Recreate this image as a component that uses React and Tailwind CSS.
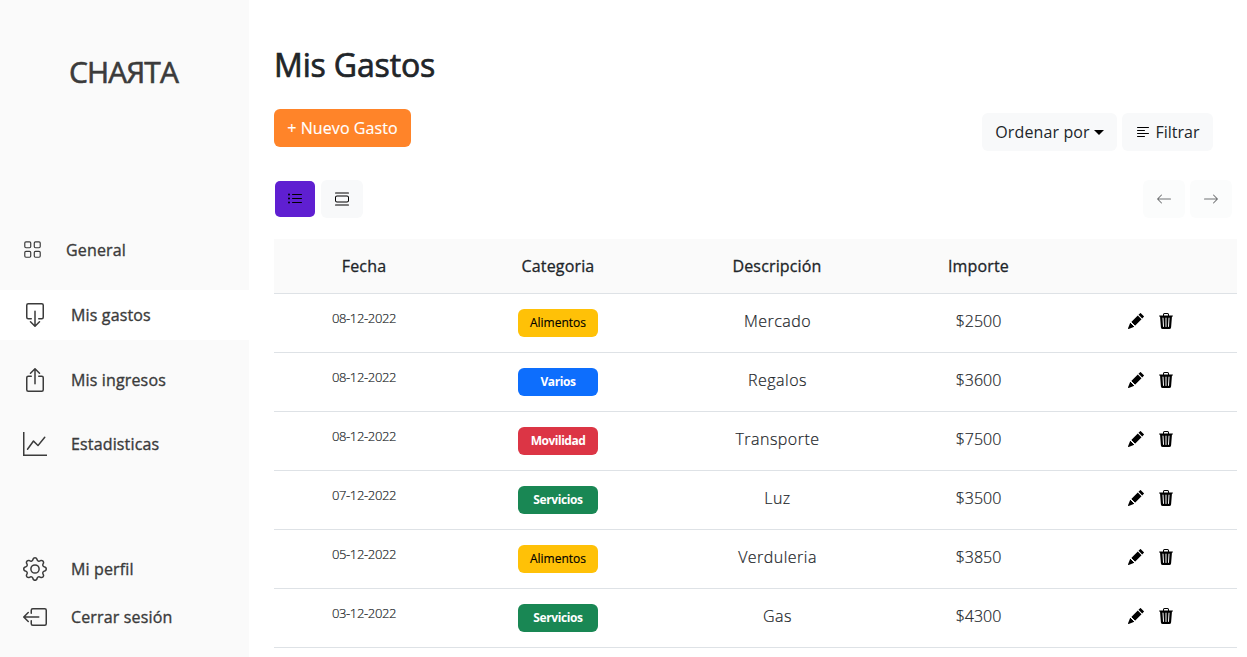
import React from "react";
import {
  BsGrid, BsBoxArrowDown, BsBoxArrowUp, BsGraphUp, BsGear, BsBoxArrowLeft,
  BsListUl, BsViewList, BsTextLeft, BsArrowLeft, BsArrowRight, BsPencilFill, BsTrash3Fill,
} from "react-icons/bs";

const rows = [
  ["08-12-2022", "Alimentos", "Mercado", "$2500"],
  ["08-12-2022", "Varios", "Regalos", "$3600"],
  ["08-12-2022", "Movilidad", "Transporte", "$7500"],
  ["07-12-2022", "Servicios", "Luz", "$3500"],
  ["05-12-2022", "Alimentos", "Verduleria", "$3850"],
  ["03-12-2022", "Servicios", "Gas", "$4300"],
];

const badge = {
  Alimentos: "bg-[#ffc107] text-black [-webkit-text-stroke:0.15px]",
  Varios: "bg-[#0d6efd] text-white font-bold tracking-[-0.4px]",
  Movilidad: "bg-[#dc3545] text-white font-bold tracking-[-0.5px]",
  Servicios: "bg-[#198754] text-white font-bold tracking-[-0.4px]",
};

function NavItem({ icon: Icon, label, size = 24, className = "" }) {
  return (
    <a className={"flex items-center gap-6 pl-[23px] text-[#3b3b3b] " + className}>
      <Icon size={size} className="shrink-0" />
      <span className="leading-6 tracking-[0.15px] whitespace-nowrap [-webkit-text-stroke:0.35px]">{label}</span>
    </a>
  );
}

export default function App() {
  return (
    <div className="flex h-[657px] w-[1247px] overflow-hidden bg-white font-['Open_Sans',sans-serif] text-base text-[#212529]">
      <aside className="flex w-[249px] shrink-0 flex-col bg-[#fafafa]">
        <div className="flex justify-center pt-[51px] pr-0.5 text-[30px] leading-[42px] text-[#3b3b3b]">
          <span className="tracking-[-0.9px] [-webkit-text-stroke:0.6px]">CHAЯTA</span>
        </div>
        <nav className="mt-[132px] flex flex-col">
          <NavItem icon={BsGrid} label="General" size={19} className="h-[50px] [&_svg]:mb-0.5" />
          <NavItem icon={BsBoxArrowDown} label="Mis gastos" className="mt-[15px] h-[50px] bg-white" />
          <NavItem icon={BsBoxArrowUp} label="Mis ingresos" className="mt-[15px] h-[50px]" />
          <NavItem icon={BsGraphUp} label="Estadisticas" className="mt-[14px] h-[50px]" />
        </nav>
        <nav className="mt-[76px] flex flex-col">
          <NavItem icon={BsGear} label="Mi perfil" className="h-12" />
          <NavItem icon={BsBoxArrowLeft} label="Cerrar sesión" className="h-12" />
        </nav>
      </aside>
      <main className="flex w-[973px] flex-col pl-[25px] box-content">
        <h1 className="mt-[46px] text-[32px] leading-[38px] tracking-[-0.15px] [-webkit-text-stroke:0.7px]">Mis Gastos</h1>
        <div className="mt-[25px] flex h-[42px] w-[939px] items-start justify-between">
          <button className="h-[38px] w-[137px] rounded-md bg-[#ff8429] tracking-[0.1px] whitespace-nowrap text-white [-webkit-text-stroke:0.15px]">+ Nuevo Gasto</button>
          <div className="mt-1 flex gap-[5px]">
            <button className="flex h-[38px] w-[135px] items-center justify-center gap-1 rounded-md bg-[#f8f9fa] whitespace-nowrap">
              <span className="tracking-[0.12px]">Ordenar por</span>
              <span className="border-x-[5px] border-t-[5px] border-x-transparent border-t-black" />
            </button>
            <button className="flex h-[38px] w-[91px] items-center justify-center gap-1 rounded-md bg-[#f8f9fa] whitespace-nowrap">
              <BsTextLeft size={16} className="text-black" />
              <span>Filtrar</span>
            </button>
          </div>
        </div>
        <div className="mt-[29px] flex h-[38px] w-[958px] items-center justify-between">
          <div className="flex items-center gap-1.5 pl-px">
            <button className="flex h-9 w-10 items-center justify-center rounded-[5px] bg-[#5f1fd1] text-black"><BsListUl size={16} /></button>
            <button className="flex h-[38px] w-[42px] items-center justify-center rounded-md bg-[#f8f9fa] text-black"><BsViewList size={16} /></button>
          </div>
          <div className="flex gap-[5px] text-[#707274]">
            <button className="flex h-[38px] w-[42px] items-center justify-center rounded-md bg-[#fbfcfc]"><BsArrowLeft size={16} /></button>
            <button className="flex h-[38px] w-[42px] items-center justify-center rounded-md bg-[#fbfcfc]"><BsArrowRight size={16} /></button>
          </div>
        </div>
        <div className="mt-[21px] w-[963px]">
          <div className="grid h-[55px] grid-cols-[180px_208px_230px_173px_172px] items-center border-b border-[#dee2e6] bg-[#fafafa] text-center tracking-[0.15px] [-webkit-text-stroke:0.3px]">
            <span>Fecha</span><span>Categoria</span><span>Descripción</span><span>Importe</span><span />
          </div>
          {rows.map(([date, cat, desc, amount], i) => (
            <div key={i} className="grid h-[59px] grid-cols-[180px_208px_230px_173px_172px] items-start border-b border-[#dee2e6] text-center">
              <span className="mt-[14px] text-[13px] leading-5 font-light tracking-[-0.35px] [-webkit-text-stroke:0.2px]">{date}</span>
              <span className={"mt-[15px] h-7 w-20 justify-self-center rounded-md text-xs leading-7 " + badge[cat]}>{cat}</span>
              <span className="mt-[15px] pl-px leading-6 font-light tracking-[0.48px] [-webkit-text-stroke:0.2px]">{desc}</span>
              <span className="mt-[15px] leading-6 font-light [-webkit-text-stroke:0.2px]">{amount}</span>
              <span className="mt-[19px] flex justify-center gap-[14px] text-black"><BsPencilFill size={16} /><BsTrash3Fill size={16} /></span>
            </div>
          ))}
        </div>
      </main>
    </div>
  );
}
